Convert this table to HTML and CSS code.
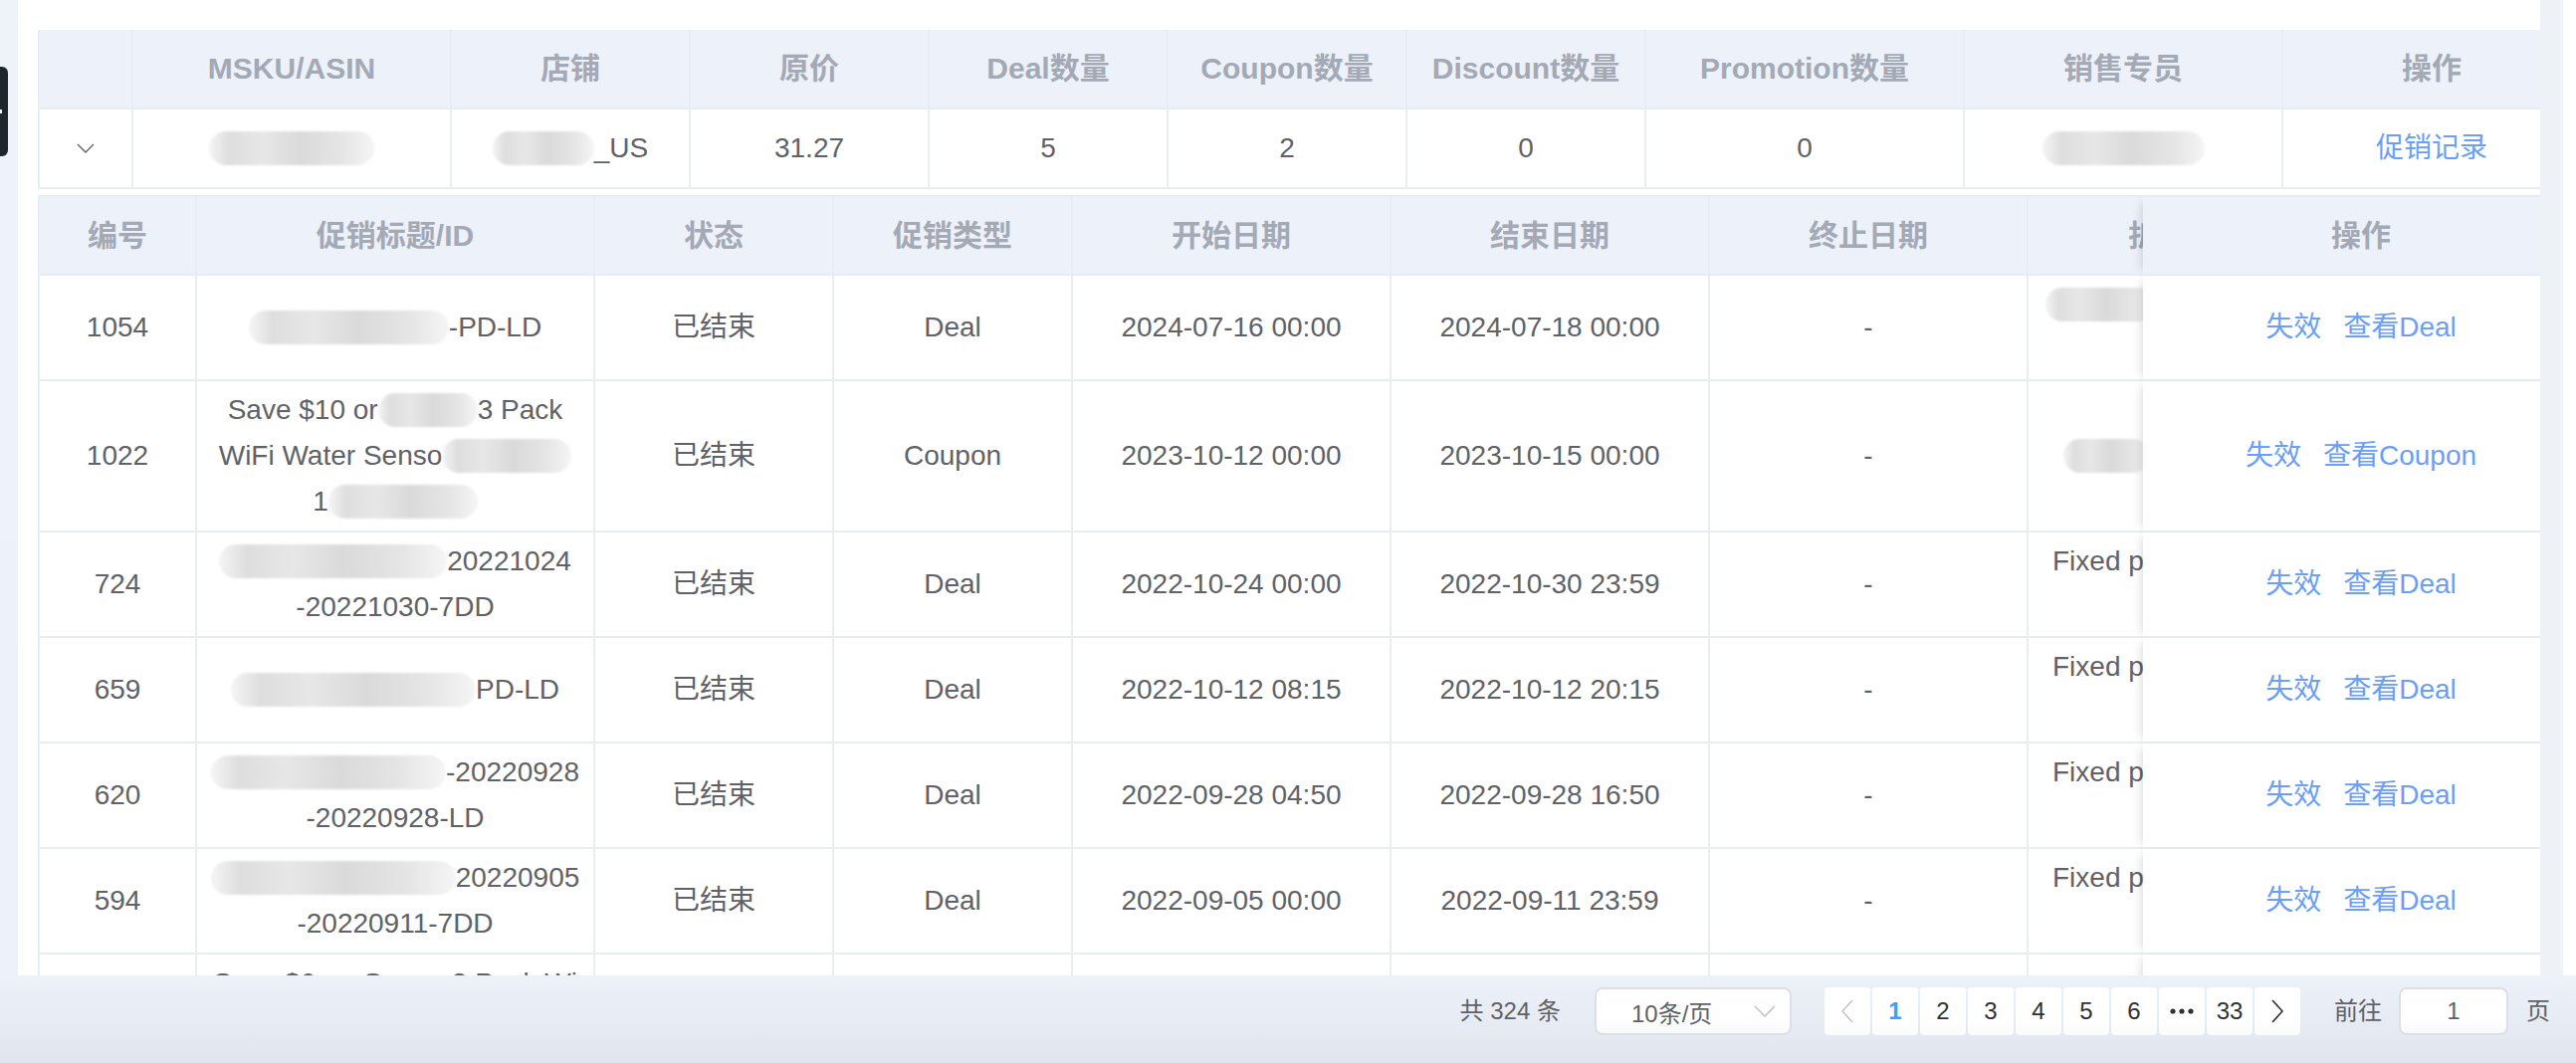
FILE: index.html
```html
<!DOCTYPE html>
<html lang="zh-CN">
<head>
<meta charset="utf-8">
<title>促销记录</title>
<link rel="stylesheet" href="styles.css">
</head>
<body>
<div class="page">
  <div class="side-tab"></div>
  <div class="card">
    <div class="scroll">
      <div class="tbl outer">
        <div class="tr">
          <div class="td th"></div>
          <div class="td th">MSKU/ASIN</div>
          <div class="td th">店铺</div>
          <div class="td th">原价</div>
          <div class="td th">Deal数量</div>
          <div class="td th">Coupon数量</div>
          <div class="td th">Discount数量</div>
          <div class="td th">Promotion数量</div>
          <div class="td th">销售专员</div>
          <div class="td th">操作</div>
        </div>
        <div class="tr b">
          <div class="td"><svg class="chev" width="18" height="10" viewBox="0 0 18 10"><polyline points="1,1 9,9 17,1" fill="none" stroke="#606266" stroke-width="1.4"/></svg></div>
          <div class="td"><span class="blur w166"></span></div>
          <div class="td"><span class="blur w102"></span>_US</div>
          <div class="td">31.27</div>
          <div class="td">5</div>
          <div class="td">2</div>
          <div class="td">0</div>
          <div class="td">0</div>
          <div class="td"><span class="blur w163"></span></div>
          <div class="td"><span class="link">促销记录</span></div>
        </div>
      </div>

      <div class="expand">
        <div class="tbl inner">
          <div class="tr">
            <div class="td th">编号</div>
            <div class="td th">促销标题/ID</div>
            <div class="td th">状态</div>
            <div class="td th">促销类型</div>
            <div class="td th">开始日期</div>
            <div class="td th">结束日期</div>
            <div class="td th">终止日期</div>
            <div class="td th clip"><div class="clip-inner center">折扣方式</div></div>
            <div class="td th fixed">操作</div>
          </div>

          <div class="tr b">
            <div class="td">1054</div>
            <div class="td"><div class="ln"><span class="blur w201"></span>-PD-LD</div></div>
            <div class="td">已结束</div>
            <div class="td">Deal</div>
            <div class="td">2024-07-16 00:00</div>
            <div class="td">2024-07-18 00:00</div>
            <div class="td">-</div>
            <div class="td clip"><div class="clip-inner"><div class="ln pl17"><span class="blur w110"></span></div><div class="ln"></div></div></div>
            <div class="td fixed"><div class="links"><span class="link">失效</span><span class="link">查看Deal</span></div></div>
          </div>

          <div class="tr b">
            <div class="td">1022</div>
            <div class="td"><div class="lines">
              <div class="ln">Save $10 or<span class="blur w100"></span>3 Pack</div>
              <div class="ln">WiFi Water Senso<span class="blur w130"></span></div>
              <div class="ln">1<span class="blur w150"></span></div>
            </div></div>
            <div class="td">已结束</div>
            <div class="td">Coupon</div>
            <div class="td">2023-10-12 00:00</div>
            <div class="td">2023-10-15 00:00</div>
            <div class="td">-</div>
            <div class="td clip"><div class="clip-inner"><div class="ln pl35"><span class="blur w87"></span></div></div></div>
            <div class="td fixed"><div class="links"><span class="link">失效</span><span class="link">查看Coupon</span></div></div>
          </div>

          <div class="tr b">
            <div class="td">724</div>
            <div class="td"><div class="lines">
              <div class="ln"><span class="blur w229"></span>20221024</div>
              <div class="ln">-20221030-7DD</div>
            </div></div>
            <div class="td">已结束</div>
            <div class="td">Deal</div>
            <div class="td">2022-10-24 00:00</div>
            <div class="td">2022-10-30 23:59</div>
            <div class="td">-</div>
            <div class="td clip"><div class="clip-inner"><div class="ln">Fixed price</div><div class="ln"></div></div></div>
            <div class="td fixed"><div class="links"><span class="link">失效</span><span class="link">查看Deal</span></div></div>
          </div>

          <div class="tr b">
            <div class="td">659</div>
            <div class="td"><div class="ln"><span class="blur w246"></span>PD-LD</div></div>
            <div class="td">已结束</div>
            <div class="td">Deal</div>
            <div class="td">2022-10-12 08:15</div>
            <div class="td">2022-10-12 20:15</div>
            <div class="td">-</div>
            <div class="td clip"><div class="clip-inner"><div class="ln">Fixed price</div><div class="ln"></div></div></div>
            <div class="td fixed"><div class="links"><span class="link">失效</span><span class="link">查看Deal</span></div></div>
          </div>

          <div class="tr b">
            <div class="td">620</div>
            <div class="td"><div class="lines">
              <div class="ln"><span class="blur w236"></span>-20220928</div>
              <div class="ln">-20220928-LD</div>
            </div></div>
            <div class="td">已结束</div>
            <div class="td">Deal</div>
            <div class="td">2022-09-28 04:50</div>
            <div class="td">2022-09-28 16:50</div>
            <div class="td">-</div>
            <div class="td clip"><div class="clip-inner"><div class="ln">Fixed price</div><div class="ln"></div></div></div>
            <div class="td fixed"><div class="links"><span class="link">失效</span><span class="link">查看Deal</span></div></div>
          </div>

          <div class="tr b">
            <div class="td">594</div>
            <div class="td"><div class="lines">
              <div class="ln"><span class="blur w246"></span>20220905</div>
              <div class="ln">-20220911-7DD</div>
            </div></div>
            <div class="td">已结束</div>
            <div class="td">Deal</div>
            <div class="td">2022-09-05 00:00</div>
            <div class="td">2022-09-11 23:59</div>
            <div class="td">-</div>
            <div class="td clip"><div class="clip-inner"><div class="ln">Fixed price</div><div class="ln"></div></div></div>
            <div class="td fixed"><div class="links"><span class="link">失效</span><span class="link">查看Deal</span></div></div>
          </div>

          <div class="tr b">
            <div class="td"></div>
            <div class="td"><div class="lines">
              <div class="ln">Save $6 on Govee 3 Pack Wi</div>
              <div class="ln"></div>
              <div class="ln"></div>
            </div></div>
            <div class="td"></div>
            <div class="td"></div>
            <div class="td"></div>
            <div class="td"></div>
            <div class="td"></div>
            <div class="td clip"></div>
            <div class="td fixed"></div>
          </div>
        </div>
      </div>
    </div>
    <div class="vbar"></div>
  </div>

  <div class="footer">
    <span class="total">共 324 条</span>
    <div class="select">
      <span>10条/页</span>
      <svg class="sel-arrow" width="22" height="12" viewBox="0 0 22 12"><polyline points="1,1 11,11 21,1" fill="none" stroke="#c0c4cc" stroke-width="1.6"/></svg>
    </div>
    <div class="pager">
      <div class="pg"><svg width="12" height="24" viewBox="0 0 12 24"><polyline points="11,1 1,12 11,23" fill="none" stroke="#c0c4cc" stroke-width="1.6"/></svg></div>
      <div class="pg active">1</div>
      <div class="pg">2</div>
      <div class="pg">3</div>
      <div class="pg">4</div>
      <div class="pg">5</div>
      <div class="pg">6</div>
      <div class="pg more"><svg width="24" height="6" viewBox="0 0 24 6"><circle cx="3" cy="3" r="2.6" fill="#303133"/><circle cx="12" cy="3" r="2.6" fill="#303133"/><circle cx="21" cy="3" r="2.6" fill="#303133"/></svg></div>
      <div class="pg">33</div>
      <div class="pg"><svg width="12" height="24" viewBox="0 0 12 24"><polyline points="1,1 11,12 1,23" fill="none" stroke="#303133" stroke-width="1.6"/></svg></div>
    </div>
    <span class="jump-label">前往</span>
    <div class="jinput">1</div>
    <span class="jump-unit">页</span>
  </div>
</div>
</body>
</html>
```
FILE: styles.css
```css
body {
  margin: 0;
  font-family: "Liberation Sans", "Noto Sans CJK SC", sans-serif;
  font-size: 28px;
  color: #606266;
}

.page {
  position: relative;
  width: 2588px;
  height: 1068px;
  overflow: hidden;
  background: linear-gradient(180deg, #eef2f9 0%, #edf1f9 91.7%, #e1e5ee 100%);
}

.side-tab {
  position: absolute;
  left: 0;
  top: 67px;
  width: 8px;
  height: 90px;
  background: #1f262e;
  border-radius: 0 6px 6px 0;
  z-index: 3;
}

.side-tab::after {
  content: "";
  position: absolute;
  left: 0;
  top: 43px;
  width: 2px;
  height: 4px;
  background: #ffffff;
}

.card {
  margin-left: 18px;
  height: 980px;
  background: #ffffff;
  display: flex;
  padding-right: 13px;
}

.scroll {
  flex: 1;
  min-width: 0;
  overflow: hidden;
  padding: 30px 0 0 20px;
}

.vbar {
  width: 23px;
  background: #eef1f6;
}

.tbl {
  width: max-content;
  border-left: 2px solid #e8ecf3;
}

.tr {
  display: grid;
}

.outer .tr {
  grid-template-columns: 94px 320px 240px 240px 240px 240px 240px 320px 320px 300px;
}

.inner .tr {
  grid-template-columns: 158px 400px 240px 240px 320px 320px 320px 115px 440px;
}

.td {
  box-sizing: border-box;
  border-right: 2px solid #e8ecf3;
  border-bottom: 2px solid #e8ecf3;
  display: flex;
  align-items: center;
  justify-content: center;
  text-align: center;
  padding: 0 20px;
  line-height: 46px;
  background: #ffffff;
  white-space: nowrap;
}

.th {
  background: #edf1f9;
  color: #a3a9b5;
  font-weight: 700;
  font-size: 30px;
}

.outer .td {
  height: 80px;
}

.expand {
  padding-top: 6px;
}

.inner {
  border-top: 2px solid #e8ecf3;
}

.inner .th {
  height: 79px;
}

.inner .b .td {
  min-height: 106px;
  padding: 6px 20px;
}

.lines {
  display: flex;
  flex-direction: column;
  align-items: center;
}

.ln {
  height: 46px;
  display: flex;
  align-items: center;
  justify-content: center;
}

.clip,
.inner .b .clip {
  padding: 0;
  overflow: hidden;
  justify-content: flex-start;
  border-right: none;
}

.clip-inner {
  width: 320px;
  flex: none;
  box-sizing: border-box;
  padding-left: 24px;
  text-align: left;
}

.clip-inner .ln {
  justify-content: flex-start;
}

.clip-inner.center {
  padding-left: 0;
  text-align: center;
}

.pl17 {
  margin-left: -7px;
}

.pl35 {
  margin-left: 11px;
}

.fixed,
.inner .b .fixed {
  position: relative;
  z-index: 1;
  box-shadow: -7px 0 9px -5px rgba(0, 0, 0, 0.13);
  padding: 0;
}

.links {
  display: flex;
  gap: 22px;
}

.link {
  color: #6b9ef6;
}

.chev {
  display: block;
}

.blur {
  display: inline-block;
  height: 34px;
  border-radius: 17px;
  background: linear-gradient(90deg, #f5f5f5 0%, #dedede 12%, #e7e7e7 32%, #dadada 55%, #e5e5e5 80%, #f5f5f5 100%);
  filter: blur(1px);
  vertical-align: middle;
}

.w87 { width: 87px; }
.w100 { width: 100px; }
.w102 { width: 102px; }
.w110 { width: 110px; }
.w130 { width: 130px; }
.w150 { width: 150px; }
.w163 { width: 163px; }
.w166 { width: 166px; }
.w201 { width: 201px; }
.w229 { width: 229px; }
.w236 { width: 236px; }
.w246 { width: 246px; }

.footer {
  display: flex;
  justify-content: flex-end;
  align-items: flex-start;
  height: 88px;
  box-sizing: border-box;
  padding: 12px 26px 0 0;
  font-size: 24px;
  color: #606266;
}

.total,
.jump-label,
.jump-unit {
  line-height: 48px;
}

.total {
  margin-right: 34px;
}

.select {
  width: 198px;
  height: 48px;
  box-sizing: border-box;
  border: 2px solid #dcdfe6;
  border-radius: 8px;
  background: linear-gradient(180deg, #ffffff 60%, #f9fafc 100%);
  display: flex;
  align-items: center;
  padding: 0 14px 0 35px;
  margin-right: 33px;
}

.sel-arrow {
  margin-left: auto;
}

.pager {
  display: flex;
  gap: 2px;
  margin-right: 34px;
}

.pg {
  width: 46px;
  height: 48px;
  border-radius: 4px;
  background: linear-gradient(180deg, #ffffff 60%, #fafbfc 100%);
  display: flex;
  align-items: center;
  justify-content: center;
  color: #303133;
}

.pg.active {
  color: #409eff;
  font-weight: 700;
}

.jump-label {
  margin-right: 17px;
}

.jinput {
  width: 110px;
  height: 48px;
  box-sizing: border-box;
  border: 2px solid #dcdfe6;
  border-radius: 8px;
  background: linear-gradient(180deg, #ffffff 60%, #f9fafc 100%);
  display: flex;
  align-items: center;
  justify-content: center;
  color: #606266;
  margin-right: 18px;
}
```
